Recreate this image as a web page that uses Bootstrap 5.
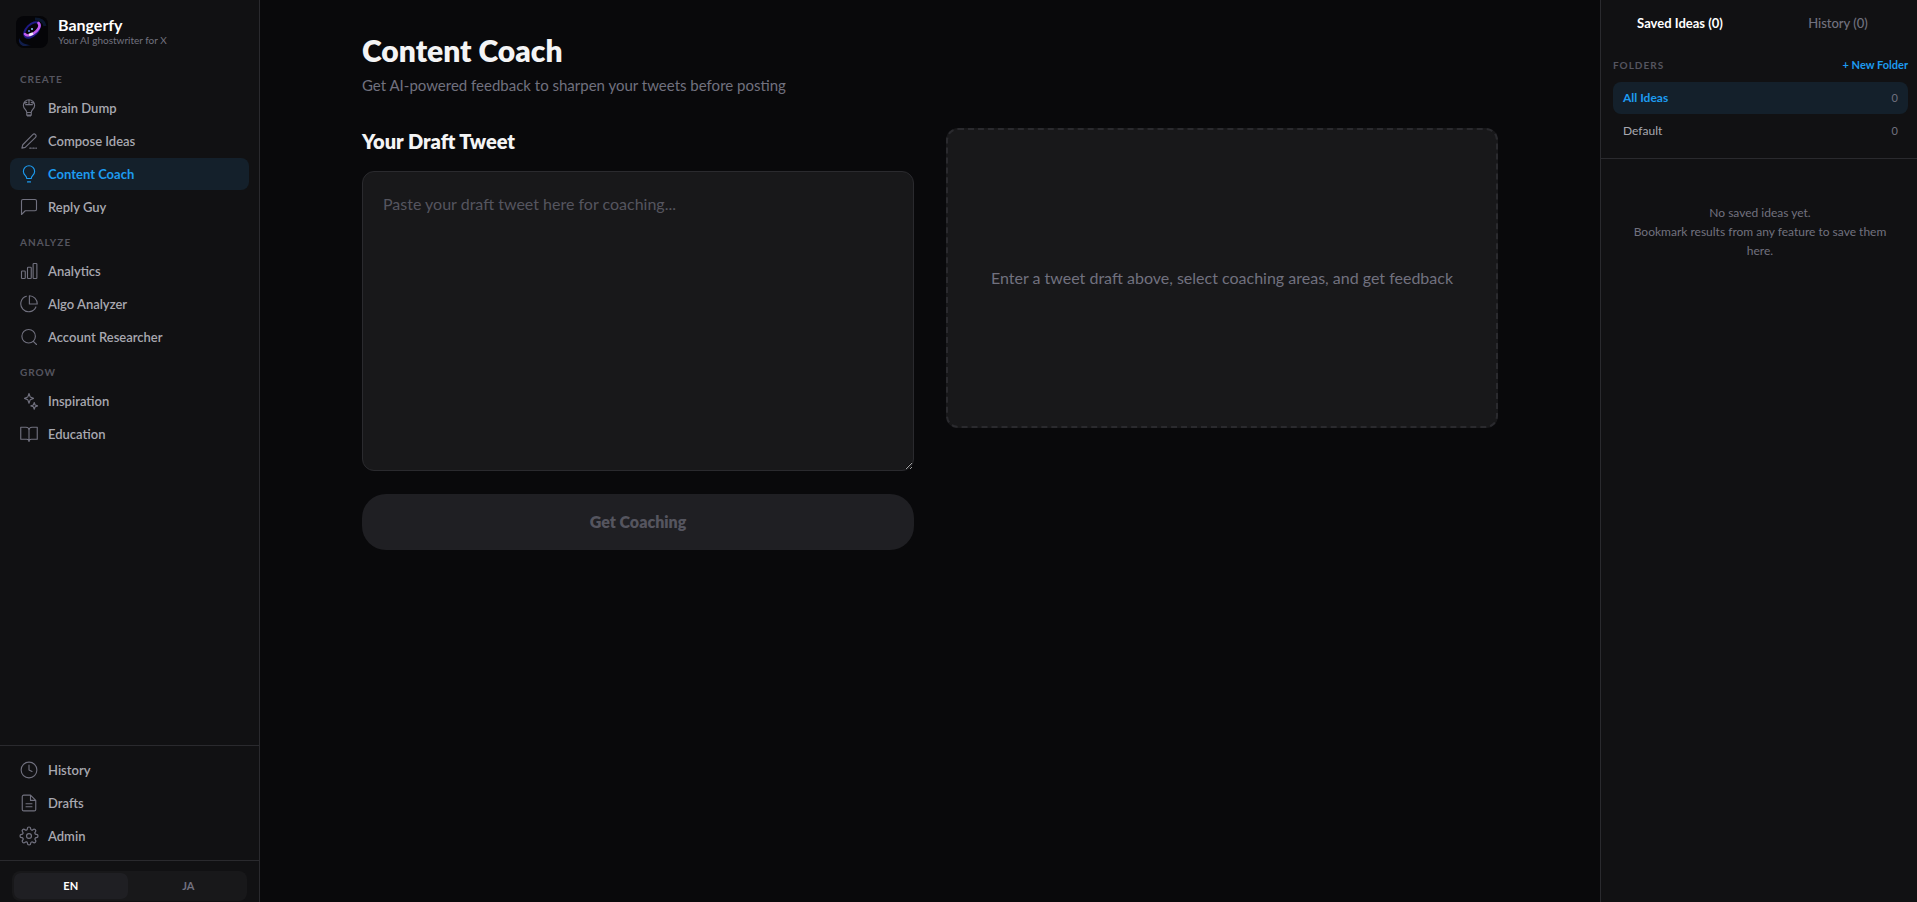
<!DOCTYPE html>
<html lang="en">
<head>
<meta charset="utf-8">
<meta name="viewport" content="width=device-width, initial-scale=1">
<title>Bangerfy - Content Coach</title>
<link rel="stylesheet" href="https://cdn.jsdelivr.net/npm/bootstrap@5.3.0/dist/css/bootstrap.min.css">
<style>
  :root { --accent: #1d9bf0; --line: #2a2a2e; --panel: #111113; --dim: #71717f; --faint: #55555f; --soft: #a8a8b0; }
  body { background: #09090b; color: #f4f4f5; font-family: Lato, "Noto Sans", sans-serif; font-size: 14px; line-height: 20px; }
  .sidebar { width: 260px; background: var(--panel); border-right: 1px solid var(--line); }
  .brand { padding: 16px 16px 0; gap: 10px; height: 60px; }
  .brand-name { font-size: 16px; line-height: 17px; font-weight: 700; color: #fff; }
  .brand-tag { font-size: 10px; line-height: 14px; color: var(--dim); }
  .side-scroll { padding: 0 10px; }
  .side-foot { padding: 8px 10px; border-top: 1px solid var(--line); }
  .caption-text { font-size: 10px; line-height: 16px; font-weight: 700; letter-spacing: 1px; color: var(--faint); text-transform: uppercase; }
  .side-caption { margin: 11px 10px 5px; }
  .side-nav { gap: 1px; }
  .side-nav .nav-link { height: 32px; padding: 0 10px; gap: 10px; border-radius: 8px; color: var(--soft); font-size: 13px; font-weight: 600; }
  .side-nav .nav-link svg { color: var(--dim); }
  .side-nav .nav-link.active, .folder.active { background: #14202b; color: var(--accent); font-weight: 700; }
  .side-nav .nav-link.active svg { color: var(--accent); }
  .icon { width: 18px; height: 18px; flex: none; fill: none; stroke: currentColor; stroke-width: 1.5; stroke-linecap: round; stroke-linejoin: round; }
  .lang-wrap { padding: 10px 12px 1px; border-top: 1px solid var(--line); }
  .lang { background: #18181a; border-radius: 8px; padding: 2px; height: 30px; gap: 4px; }
  .lang button { border: 0; border-radius: 7px; background: none; color: var(--dim); font-size: 11px; font-weight: 700; line-height: 16px; }
  .lang button.on { background: #1f1f23; color: #fff; }
  .workspace { max-width: 1200px; padding: 32px; }
  .page-title { font-size: 30px; line-height: 36px; font-weight: 800; margin: 0 0 7px; }
  .page-sub { font-size: 15px; line-height: 20px; color: var(--dim); margin: 0 0 33px; }
  .draft-label { font-size: 20px; line-height: 26px; font-weight: 800; margin-bottom: 17px; }
  .draft { height: 300px; padding: 20px; background: #18181a; border: 1px solid var(--line); border-radius: 12px; color: #f4f4f5; font-size: 16px; line-height: 24px; resize: vertical; }
  .draft:focus { background: #18181a; color: #f4f4f5; border-color: var(--accent); box-shadow: none; }
  .draft::placeholder { color: var(--faint); }
  .coach-btn, .coach-btn:disabled { height: 56px; margin-top: 23px; border: 0; border-radius: 24px; background: #1f1f23; color: var(--faint); font-size: 16px; font-weight: 800; opacity: 1; }
  .result { height: 300px; border: 2px dashed var(--line); border-radius: 12px; background: #18181a; color: var(--dim); font-size: 16px; }
  .ideas { width: 317px; background: var(--panel); border-left: 1px solid var(--line); }
  .tabs { height: 45px; }
  .tabs button { border: 0; background: none; color: var(--dim); font-size: 13px; font-weight: 500; }
  .tabs button.on { color: #fff; font-weight: 700; }
  .folders { padding: 12px 9px 11px 12px; border-bottom: 1px solid var(--line); }
  .folder-head { height: 16px; margin-bottom: 9px; }
  .new-folder { border: 0; background: none; padding: 0; color: var(--accent); font-size: 11px; font-weight: 700; line-height: 16px; }
  .folder-list { gap: 1px; }
  .folder { height: 32px; padding: 0 10px; border: 0; border-radius: 8px; background: none; color: var(--soft); font-size: 12px; }
  .folder-count { font-size: 11px; font-weight: 400; color: var(--dim); }
  .empty { padding: 44px 22px 44px 24px; font-size: 12px; line-height: 19px; color: var(--dim); }
</style>
</head>
<body>
<div class="d-flex min-vh-100">
  <aside class="sidebar d-flex flex-column flex-shrink-0">
    <div class="brand d-flex">
      <svg width="32" height="32" viewBox="0 0 32 32" class="flex-shrink-0" role="img" aria-label="Bangerfy logo">
        <rect width="32" height="32" rx="8" fill="#050508"/>
        <path d="M3 22c2 5 7 7 12 7l-5 1H7q-5-2-4-8z" fill="#101d4a"/>
        <path d="M19 3c5 0 9 2 10 7" fill="none" stroke="#0b1830" stroke-width="3"/>
        <ellipse cx="16" cy="14" rx="9.500" ry="5.500" transform="rotate(-45 16 14)" fill="none" stroke="#1f1a85" stroke-width="2"/>
        <path d="M22.500 7c3 3-1 8-5 10.500-4 2.500-7 2.500-8.500.5" fill="none" stroke="#c25cf0" stroke-width="2.600" stroke-linecap="round"/>
        <path d="M13 19l4-1.500" stroke="#f5eaff" stroke-width="2.500"/>
        <circle cx="16" cy="13" r="1" fill="#8fc8ff"/><circle cx="13" cy="15" r="1" fill="#5b89e8"/>
      </svg>
      <div class="flex-fill">
        <div class="brand-name">Bangerfy</div>
        <div class="brand-tag">Your AI ghostwriter for X</div>
      </div>
    </div>

    <div class="side-scroll flex-fill">
      <div class="side-caption caption-text">Create</div>
      <nav class="side-nav nav flex-column" aria-label="Create">
        <a class="nav-link d-flex align-items-center" href="#"><svg class="icon" viewBox="0 0 24 24"><path d="M9 18c0-3.500-4.500-5-4.500-9.500a7.500 7.500 0 0 1 15 0C19.500 13 15 14.500 15 18zM9 18v3.500h6V18M10 22.500h4M12 1v6.500M7.500 7.500h9M6 5.500l3-1M18 5.500l-3-1"/></svg>Brain Dump</a>
        <a class="nav-link d-flex align-items-center" href="#"><svg class="icon" viewBox="0 0 24 24"><path d="M17 3.500a2.600 2.600 0 0 1 3.700 3.700L7 20.500 2.500 21.500 3.700 17z"/><path d="M13 21.500h9" stroke-dasharray="2 2"/></svg>Compose Ideas</a>
        <a class="nav-link d-flex align-items-center active" href="#" aria-current="page"><svg class="icon" viewBox="0 0 24 24"><path d="M9 18c0-3.500-4.500-5-4.500-9.500a7.500 7.500 0 0 1 15 0C19.500 13 15 14.500 15 18zM10 22.500h4"/></svg>Content Coach</a>
        <a class="nav-link d-flex align-items-center" href="#"><svg class="icon" viewBox="0 0 24 24"><path d="M22 15a2 2 0 0 1-2 2H7l-5 5V4a2 2 0 0 1 2-2h16a2 2 0 0 1 2 2z"/></svg>Reply Guy</a>
      </nav>
      <div class="side-caption caption-text">Analyze</div>
      <nav class="side-nav nav flex-column" aria-label="Analyze">
        <a class="nav-link d-flex align-items-center" href="#"><svg class="icon" viewBox="0 0 24 24"><rect x="2" y="12" width="5" height="10" rx="1"/><rect x="10" y="7" width="5" height="15" rx="1"/><rect x="17.500" y="2" width="5" height="20" rx="1"/></svg>Analytics</a>
        <a class="nav-link d-flex align-items-center" href="#"><svg class="icon" viewBox="0 0 24 24"><path d="M21.200 15.900A10.500 10.500 0 1 1 8.500 1.700M12.500 1v11H23A10.500 11 0 0 0 12.500 1z"/></svg>Algo Analyzer</a>
        <a class="nav-link d-flex align-items-center" href="#"><svg class="icon" viewBox="0 0 24 24"><circle cx="11.500" cy="11" r="9"/><path d="M22 22l-4.300-4.300"/></svg>Account Researcher</a>
      </nav>
      <div class="side-caption caption-text">Grow</div>
      <nav class="side-nav nav flex-column" aria-label="Grow">
        <a class="nav-link d-flex align-items-center" href="#"><svg class="icon" viewBox="0 0 24 24"><path d="M12 2l1.700 4.800L18 8.500l-4.300 1.700L12 15l-1.700-4.800L6 8.500l4.300-1.700zM19 14l1.200 3.300L23.500 18.500l-3.300 1.200L19 23l-1.200-3.300-3.300-1.200 3.300-1.200z"/></svg>Inspiration</a>
        <a class="nav-link d-flex align-items-center" href="#"><svg class="icon" viewBox="0 0 24 24"><path d="M1 3h7a4 4 0 0 1 4 4v15a3 3 0 0 0-3-3H1zM23 3h-7a4 4 0 0 0-4 4v15a3 3 0 0 1 3-3h8z"/></svg>Education</a>
      </nav>
    </div>

    <nav class="side-foot side-nav nav flex-column" aria-label="Library">
      <a class="nav-link d-flex align-items-center" href="#"><svg class="icon" viewBox="0 0 24 24"><circle cx="12" cy="12" r="10.500"/><path d="M12 5.500V12l4 2"/></svg>History</a>
      <a class="nav-link d-flex align-items-center" href="#"><svg class="icon" viewBox="0 0 24 24"><path d="M14 1.500H5a2 2 0 0 0-2 2v17a2 2 0 0 0 2 2h14a2 2 0 0 0 2-2V8.500zM14 1.500v7h7M16 13H8M16 17H8"/></svg>Drafts</a>
      <a class="nav-link d-flex align-items-center" href="#"><svg class="icon overflow-visible" viewBox="1 1 22 22"><circle cx="12" cy="12" r="3"/><path d="M19.400 15a1.650 1.650 0 0 0 .33 1.820l.06.06a2 2 0 0 1-2.830 2.830l-.06-.06a1.650 1.650 0 0 0-2.800 1.170V21a2 2 0 0 1-4 0v-.09A1.650 1.650 0 0 0 7.200 19.700l-.06.06a2 2 0 0 1-2.830-2.830l.06-.06A1.650 1.650 0 0 0 3.200 14H3a2 2 0 0 1 0-4h.09A1.650 1.650 0 0 0 4.300 7.200l-.06-.06a2 2 0 0 1 2.830-2.830l.06.06A1.650 1.650 0 0 0 10 3.200V3a2 2 0 0 1 4 0v.09a1.650 1.650 0 0 0 2.800 1.210l.06-.06a2 2 0 0 1 2.830 2.830l-.06.06A1.650 1.650 0 0 0 20.800 10H21a2 2 0 0 1 0 4h-.09a1.650 1.650 0 0 0-1.510 1z"/></svg>Admin</a>
    </nav>
    <div class="lang-wrap">
      <div class="lang d-flex" role="group" aria-label="Language">
        <button type="button" class="on w-50">EN</button>
        <button type="button" class="w-50">JA</button>
      </div>
    </div>
  </aside>

  <main class="flex-fill">
    <div class="workspace mx-auto">
      <h1 class="page-title">Content Coach</h1>
      <p class="page-sub">Get AI-powered feedback to sharpen your tweets before posting</p>
      <div class="row row-cols-1 row-cols-lg-2" style="--bs-gutter-x: 32px">
        <section class="col">
          <label for="draft" class="draft-label d-block">Your Draft Tweet</label>
          <textarea id="draft" class="draft form-control" placeholder="Paste your draft tweet here for coaching..."></textarea>
          <button type="button" class="coach-btn btn w-100" disabled>Get Coaching</button>
        </section>
        <section class="col">
          <div class="result d-flex align-items-center justify-content-center text-center">Enter a tweet draft above, select coaching areas, and get feedback</div>
        </section>
      </div>
    </div>
  </main>

  <aside class="ideas flex-shrink-0">
    <div class="tabs d-flex">
      <button type="button" class="on w-50">Saved Ideas (0)</button>
      <button type="button" class="w-50">History (0)</button>
    </div>
    <div class="folders">
      <div class="folder-head d-flex justify-content-between align-items-center">
        <span class="caption-text">Folders</span>
        <button type="button" class="new-folder">+ New Folder</button>
      </div>
      <div class="folder-list d-flex flex-column">
        <button type="button" class="folder active d-flex justify-content-between align-items-center">All Ideas <span class="folder-count">0</span></button>
        <button type="button" class="folder d-flex justify-content-between align-items-center">Default <span class="folder-count">0</span></button>
      </div>
    </div>
    <p class="empty text-center mb-0">No saved ideas yet.<br>Bookmark results from any feature to save them here.</p>
  </aside>
</div>
<script src="https://cdn.jsdelivr.net/npm/bootstrap@5.3.0/dist/js/bootstrap.bundle.min.js"></script>
</body>
</html>
